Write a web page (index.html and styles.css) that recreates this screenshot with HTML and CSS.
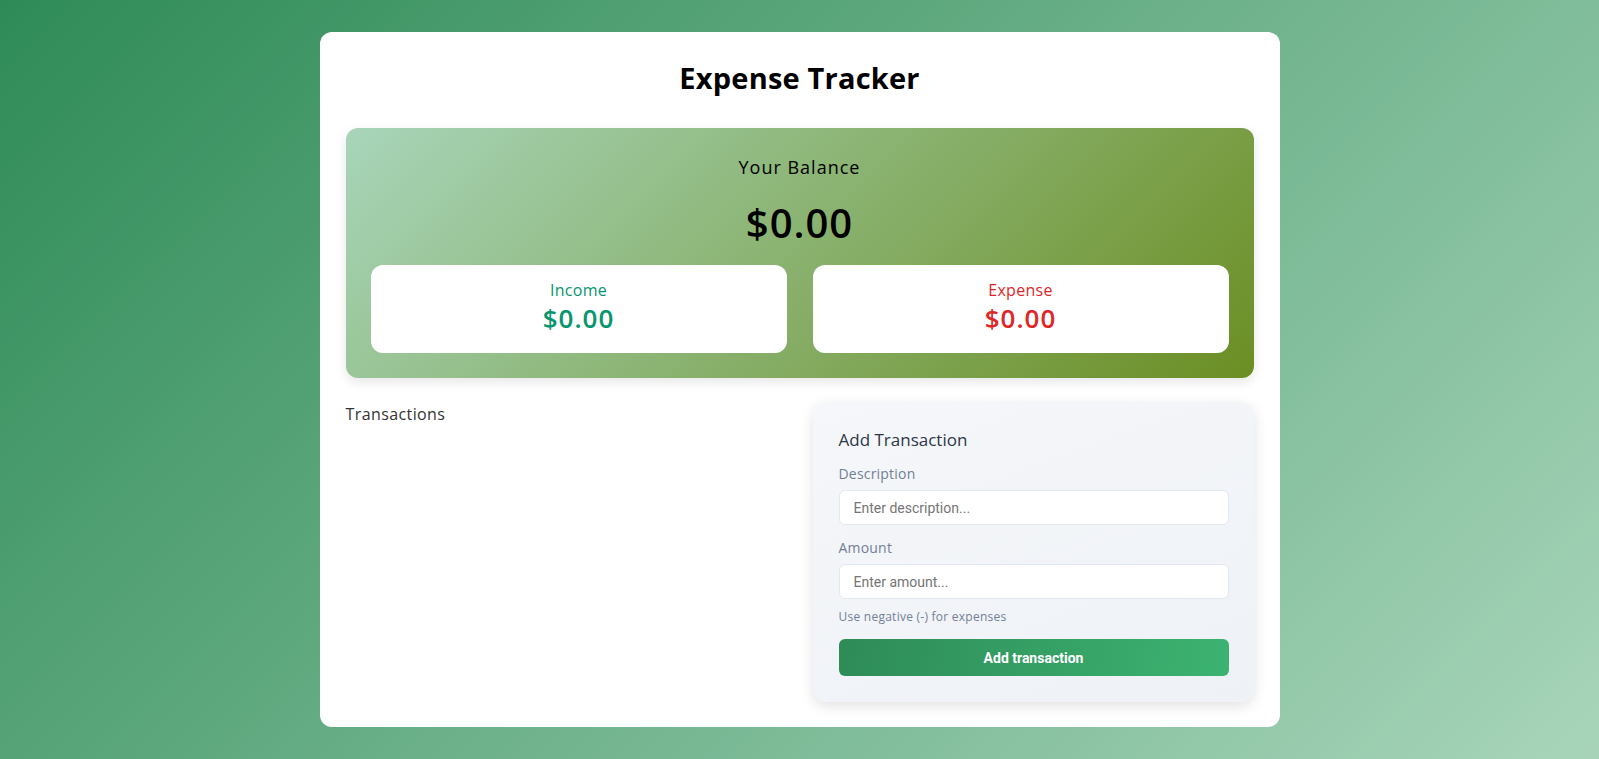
FILE: index.html
```html
<!DOCTYPE html>
<html lang="en">
<head>
<meta charset="UTF-8">
<title>Expense Tracker</title>
<link rel="stylesheet" href="styles.css">
</head>
<body>
  <main class="container">
    <h1 class="title">Expense Tracker</h1>

    <section class="balance-panel">
      <h3 class="balance-label">Your Balance</h3>
      <div class="balance-amount">$0.00</div>
      <div class="summary">
        <div class="summary-box">
          <span class="summary-label income">Income</span>
          <span class="summary-value income">$0.00</span>
        </div>
        <div class="summary-box">
          <span class="summary-label expense">Expense</span>
          <span class="summary-value expense">$0.00</span>
        </div>
      </div>
    </section>

    <section class="lower">
      <div class="transactions">
        <h3 class="section-title">Transactions</h3>
        <ul class="list"></ul>
      </div>
      <form class="form-card">
        <h3 class="form-title">Add Transaction</h3>
        <label class="field-label" for="desc">Description</label>
        <input class="field-input" id="desc" type="text" placeholder="Enter description...">
        <label class="field-label second" for="amount">Amount</label>
        <input class="field-input" id="amount" type="text" placeholder="Enter amount...">
        <p class="hint">Use negative (-) for expenses</p>
        <button class="submit" type="button">Add transaction</button>
      </form>
    </section>
  </main>
</body>
</html>
```

FILE: styles.css
```css
* { box-sizing: border-box; }

html, body { margin: 0; padding: 0; }

body {
  min-height: 100vh;
  background: linear-gradient(135deg, #2e8b57 0%, #a8d5ba 100%);
  font-family: "Open Sans", "Inter", sans-serif;
  color: #000;
  padding: 32px 0;
}

.container {
  width: 960px;
  margin: 0 auto;
  background: #fff;
  border-radius: 12px;
  padding: 26px 26px 25px;
}

.title {
  margin: 0 0 30px;
  text-align: center;
  font-size: 29px;
  line-height: 40px;
  font-weight: 700;
  letter-spacing: 0.2px;
}

.balance-panel {
  background: linear-gradient(135deg, #a8d5ba 0%, #6b8e23 100%);
  border-radius: 12px;
  padding: 25px;
  box-shadow: 0 4px 12px rgba(0, 0, 0, 0.1);
  text-align: center;
}

.balance-label {
  margin: 0;
  font-size: 18px;
  line-height: 28px;
  font-weight: 500;
  letter-spacing: 1px;
}

.balance-amount {
  margin-top: 14px;
  font-size: 40px;
  line-height: 56px;
  font-weight: 600;
  letter-spacing: 1px;
}

.summary {
  margin-top: 14px;
  display: grid;
  grid-template-columns: 1fr 1fr;
  gap: 26px;
}

.summary-box {
  background: #fff;
  border-radius: 12px;
  height: 88px;
  display: flex;
  flex-direction: column;
  align-items: center;
  justify-content: center;
  padding-bottom: 4px;
}

.summary-label {
  font-size: 16px;
  line-height: 22px;
  font-weight: 400;
  letter-spacing: 0.3px;
}

.summary-value {
  font-size: 26px;
  line-height: 34px;
  font-weight: 600;
  letter-spacing: 1px;
}

.income { color: #05966e; }
.expense { color: #e02727; }

.lower {
  margin-top: 24px;
  display: grid;
  grid-template-columns: 1fr 1fr;
  gap: 26px;
  align-items: start;
}

.section-title {
  margin: 0;
  font-size: 16px;
  line-height: 24px;
  font-weight: 500;
  color: #333;
  letter-spacing: 0.4px;
}

.list { list-style: none; margin: 0; padding: 0; }

.form-card {
  background: linear-gradient(160deg, #f5f7fa 0%, #eef1f6 100%);
  border-radius: 14px;
  padding: 26px 25px 26px 26px;
  box-shadow: 0 4px 14px rgba(0, 0, 0, 0.12);
  display: flex;
  flex-direction: column;
}

.form-title {
  margin: 0 0 12px;
  font-size: 17px;
  line-height: 24px;
  font-weight: 500;
  color: #2d3748;
  letter-spacing: 0;
}

.field-label {
  font-size: 14px;
  line-height: 20px;
  color: #718096;
  letter-spacing: 0.2px;
}

.field-label.second { margin-top: 13px; }

.field-input {
  margin-top: 6px;
  height: 35px;
  border: 1px solid #e2e8f0;
  border-radius: 6px;
  background: #fff;
  padding: 0 14px;
  font-family: "Roboto", "Liberation Sans", sans-serif;
  font-size: 14px;
  color: #333;
  outline: none;
}

.field-input::placeholder { color: #757575; }

.hint {
  margin: 10px 0 0;
  font-size: 12px;
  line-height: 16px;
  color: #718096;
  letter-spacing: 0.25px;
}

.submit {
  margin-top: 14px;
  height: 37px;
  border: none;
  border-radius: 6px;
  background: linear-gradient(100deg, #2e8b57 0%, #3cb371 100%);
  color: #fff;
  font-family: "Roboto", "Liberation Sans", sans-serif;
  font-size: 14px;
  font-weight: 700;
  cursor: pointer;
}
```
